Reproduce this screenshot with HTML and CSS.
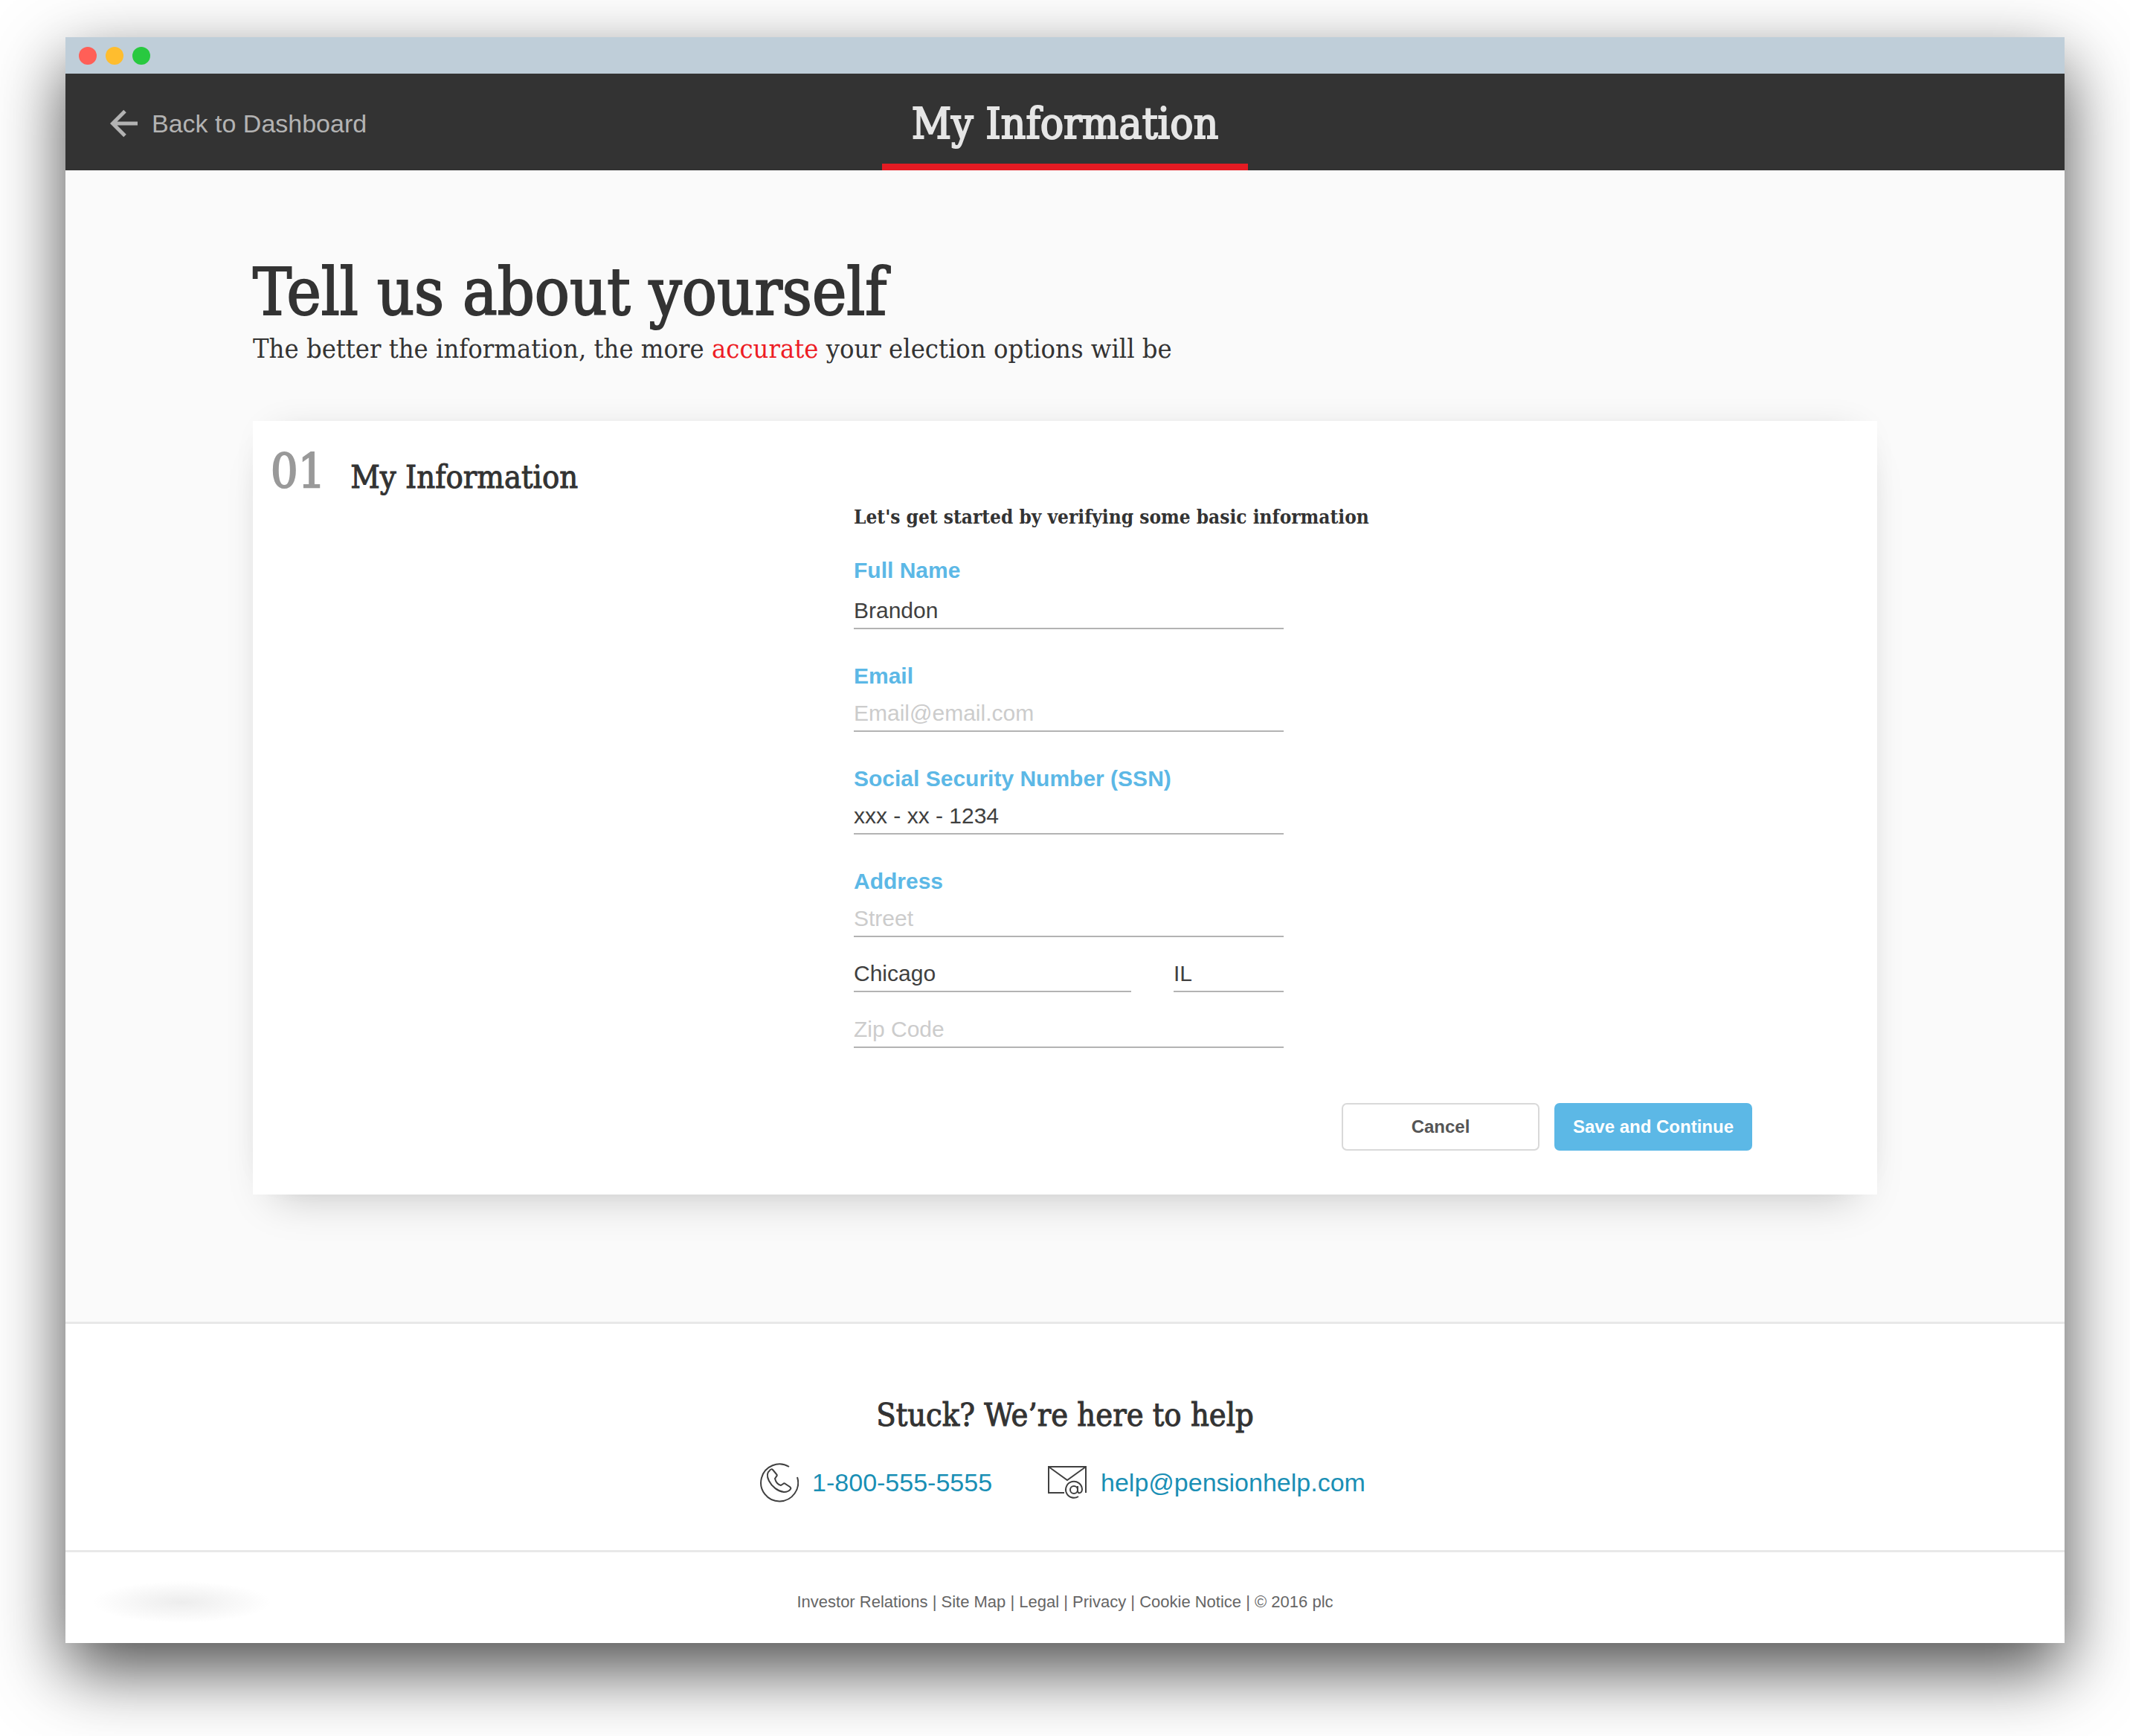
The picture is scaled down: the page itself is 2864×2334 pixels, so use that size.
FILE: index.html
```html
<!DOCTYPE html>
<html lang="en">
<head>
<meta charset="utf-8">
<title>My Information</title>
<link rel="stylesheet" href="styles.css">
</head>
<body>
<div class="window">
  <div class="titlebar">
    <span class="dot dot-close"></span>
    <span class="dot dot-min"></span>
    <span class="dot dot-max"></span>
  </div>
  <header class="header">
    <a class="back" href="#">
      <svg class="back-icon" viewBox="0 0 38 38" aria-hidden="true"><path d="M37 19H4M20 2.500 3.500 19 20 35.500"/></svg>
      Back to Dashboard
    </a>
    <h1 class="header-title">My Information</h1>
  </header>
  <main class="main">
    <h2 class="headline">Tell us about yourself</h2>
    <p class="lead">The better the information, the more <em class="accent">accurate</em> your election options will be</p>
    <form class="card">
      <div class="step">
        <span class="step-number">01</span>
        <h3 class="step-title">My Information</h3>
      </div>
      <div class="fields">
        <p class="intro">Let's get started by verifying some basic information</p>
        <div class="field field-first">
          <label class="label" for="name">Full Name</label>
          <input class="input" id="name" type="text" value="Brandon">
        </div>
        <div class="field">
          <label class="label" for="email">Email</label>
          <input class="input" id="email" type="email" placeholder="Email@email.com">
        </div>
        <div class="field">
          <label class="label" for="ssn">Social Security Number (SSN)</label>
          <input class="input" id="ssn" type="text" value="xxx - xx - 1234">
        </div>
        <div class="field">
          <label class="label" for="street">Address</label>
          <input class="input" id="street" type="text" placeholder="Street">
        </div>
        <div class="row">
          <input class="input city" type="text" value="Chicago" aria-label="City">
          <input class="input state" type="text" value="IL" aria-label="State">
        </div>
        <div class="row">
          <input class="input" type="text" placeholder="Zip Code" aria-label="Zip Code">
        </div>
      </div>
      <div class="actions">
        <button class="btn btn-plain" type="button">Cancel</button>
        <button class="btn btn-primary" type="submit">Save and Continue</button>
      </div>
    </form>
  </main>
  <section class="help">
    <h2 class="help-title">Stuck? We’re here to help</h2>
    <div class="contacts">
      <a class="contact" href="tel:18005555555">
        <svg class="contact-icon" viewBox="0 0 54 54" aria-hidden="true">
          <path d="M41 6A25 25 0 1 0 52 20"/>
          <path d="M15 11c-4 3-4 8-1 14 4 8 12 14 20 15 4 0 7-1 9-4 1-1 0-2-1-3l-6-4c-1-1-2-1-3 0l-3 2c-4-1-7-5-8-9l2-3c1-1 1-2 0-3l-5-6c-1-1-3-1-4 1z"/>
        </svg>
        1-800-555-5555
      </a>
      <a class="contact" href="mailto:help@pensionhelp.com">
        <svg class="contact-icon" viewBox="0 0 54 54" aria-hidden="true">
          <path d="M23 41H2V6h50v35M2 6l25 18L52 6"/>
          <circle cx="36" cy="37" r="5"/>
          <path d="M41 32v6c0 5 6 4 6-2a11 11 0 1 0-5 10"/>
        </svg>
        help@pensionhelp.com
      </a>
    </div>
  </section>
  <footer class="footer">
    <span class="smudge"></span>
    <nav class="legal"><a href="#">Investor Relations</a> | <a href="#">Site Map</a> | <a href="#">Legal</a> | <a href="#">Privacy</a> | <a href="#">Cookie Notice</a> | © 2016 plc</nav>
  </footer>
</div>
</body>
</html>
```
FILE: styles.css
```css
* { box-sizing: border-box; }

body {
  margin: 0;
  padding: 50px 88px 125px;
  background: #fff;
  color: #333;
  font-family: "Liberation Sans", Arial, sans-serif;
  font-size: 30px;
  line-height: 34px;
}

h1, h2, h3, p { margin: 0; font-weight: 400; }
a { color: inherit; text-decoration: none; }

.header-title, .headline, .lead, .step, .step-title, .intro, .help-title {
  font-family: "DejaVu Serif Condensed", "DejaVu Serif", serif;
}

.header-title, .headline, .step-number {
  -webkit-text-stroke: 2px currentColor;
}

.step-title, .help-title {
  -webkit-text-stroke: 1px currentColor;
}

.window {
  background: #fff;
  box-shadow: 0 36px 88px rgba(0, 0, 0, 0.7);
}

.titlebar {
  display: flex;
  align-items: center;
  gap: 12px;
  height: 49px;
  padding: 0 18px;
  background: #bfced9;
}

.dot { width: 24px; height: 24px; border-radius: 50%; }
.dot-close { background: #ff5f57; }
.dot-min { background: #ffbd2e; }
.dot-max { background: #28c940; }

.header {
  display: grid;
  grid-template-columns: 1fr auto 1fr;
  padding: 0 60px;
  background: #333;
}

.back {
  display: flex;
  align-items: center;
  gap: 18px;
  padding-top: 4px;
  color: #b3b3b3;
  font-size: 34px;
}

.back-icon {
  width: 38px;
  height: 38px;
  fill: none;
  stroke: currentColor;
  stroke-width: 5;
}

.header-title {
  padding: 14px 40px 0;
  border-bottom: 9px solid #e51b23;
  color: #e6e6e6;
  font-size: 58px;
  line-height: 107px;
}

.main {
  padding: 114px 252px 171px;
  border-bottom: 3px solid #e8e8e8;
  background: #fafafa;
}

.headline { font-size: 87px; line-height: 100px; }
.lead { margin-top: 4px; font-size: 36px; line-height: 44px; }
.accent { color: #ed1c24; font-style: normal; }

.card {
  display: grid;
  grid-template-columns: 784px 1fr;
  margin-top: 75px;
  padding: 32px 168px 59px 24px;
  background: #fff;
  box-shadow:
    0 30px 56px -28px rgba(0, 0, 0, 0.22),
    0 -10px 48px -28px rgba(0, 0, 0, 0.16);
}

.step {
  display: flex;
  align-items: baseline;
  align-self: start;
  gap: 34px;
}

.step-number { color: #999; font-size: 64px; line-height: 72px; }
.step-title { font-size: 43px; line-height: 52px; }

.fields { width: 578px; padding-top: 80px; }

.intro {
  margin-bottom: 38px;
  font-size: 26px;
  font-weight: 700;
  white-space: nowrap;
}

.field { display: grid; gap: 16px; margin-bottom: 46px; }
.field-first { gap: 20px; }
.field:has(+ .row) { margin-bottom: 32px; }

.label { color: #5cb8e6; font-weight: 700; }

.input {
  width: 100%;
  height: 42px;
  padding: 0 0 6px;
  border: 0;
  border-bottom: 2px solid #b3b3b3;
  border-radius: 0;
  background: none;
  color: #404040;
  font: inherit;
}

.input::placeholder { color: #ccc; opacity: 1; }

.row { display: flex; gap: 57px; margin-bottom: 33px; }
.city { flex: 373; }
.state { flex: 148; }

.actions {
  grid-column: 1 / -1;
  display: flex;
  justify-content: flex-end;
  gap: 20px;
  margin-top: 41px;
}

.btn {
  width: 266px;
  height: 64px;
  padding: 0;
  border: 2px solid #5cb8e6;
  border-radius: 7px;
  font: 700 24px/28px "Liberation Sans", Arial, sans-serif;
}

.btn-plain { border-color: #d9d9d9; background: #fff; color: #555; }
.btn-primary { background: #5cb8e6; color: #fff; }

.help {
  padding: 96px 60px 64px;
  border-bottom: 3px solid #e8e8e8;
  text-align: center;
}

.help-title { font-size: 43px; line-height: 52px; }

.contacts {
  display: flex;
  justify-content: center;
  gap: 74px;
  margin-top: 38px;
  padding-right: 8px;
}

.contact {
  display: flex;
  align-items: center;
  gap: 18px;
  color: #1a8fb5;
  font-size: 34px;
}

.contact-icon {
  width: 54px;
  height: 54px;
  fill: none;
  stroke: #404040;
  stroke-width: 2;
}

.footer {
  display: grid;
  grid-template-columns: 1fr auto 1fr;
  align-items: center;
  height: 122px;
  padding: 12px 36px 0;
}

.smudge {
  width: 240px;
  height: 56px;
  background: radial-gradient(closest-side, #ededed, #fff);
}

.legal { color: #666; font-size: 22px; line-height: 28px; }
```
